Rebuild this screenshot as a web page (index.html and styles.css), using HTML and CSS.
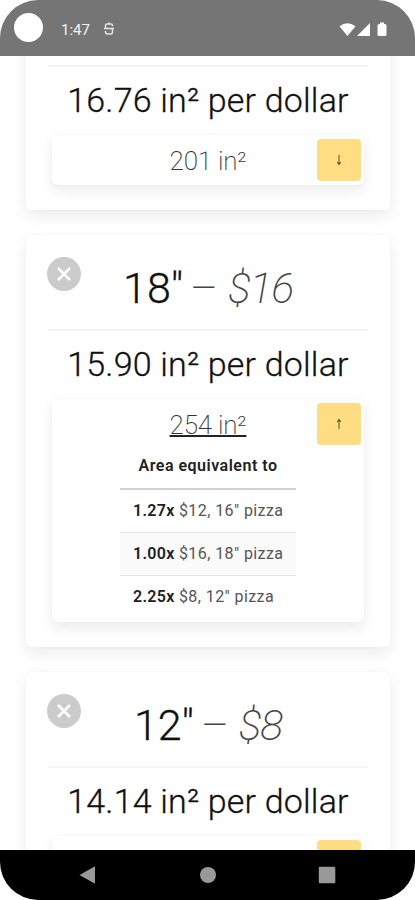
FILE: index.html
```html
<!DOCTYPE html>
<html lang="en">
<head>
<meta charset="utf-8">
<title>Pizza value</title>
<link rel="stylesheet" href="styles.css">
</head>
<body>
<div class="screen">
  <header class="status">
    <span class="camera"></span>
    <span class="clock">1:47</span>
    <svg class="app-icon" width="12" height="16" viewBox="0 0 12 16" fill="none" stroke="#e4e4e4" stroke-width="1.500"><path d="M9.500 5.200V4.500Q9.500 3 8 3H4Q2.500 3 2.500 4.500V6Q2.500 7.500 4 7.500H8Q9.500 7.500 9.500 9V11Q9.500 13 7.500 13H4.500Q2.500 13 2.500 11V10M6 1.500V3M1 7.500H11"/></svg>
    <svg class="signals" width="48" height="16" viewBox="0 0 48 16" fill="#fff"><path d="M0.500 4.200Q8.500-1.500 16.500 4.200L8.500 14ZM18 14L31 1V14ZM38.500 3.500Q38.500 2 40 2H41V0.500H45V2H46Q47.500 2 47.500 3.500V12.500Q47.500 14 46 14H40Q38.500 14 38.500 12.500Z"/></svg>
  </header>
  <main class="list">
    <article class="card">
      <div class="head"></div>
      <p class="rate">16.76 in² per dollar</p>
      <section class="area">
        <div class="area-value">201 in²</div>
        <button class="toggle"><svg width="8" height="12" viewBox="0 0 8 12"><path d="M4 1V10.500M2.300 8.200L4 10.500L5.700 8.200"/></svg></button>
      </section>
    </article>
    <article class="card">
      <div class="head">
        <button class="remove"><svg width="34" height="34" viewBox="0 0 34 34"><path d="M11 11L23 23M23 11L11 23"/></svg></button>
        <h2 class="title"><span class="size">18"</span><span class="dash">–</span><em>$16</em></h2>
      </div>
      <p class="rate">15.90 in² per dollar</p>
      <section class="area">
        <div class="area-value open">254 in²</div>
        <button class="toggle"><svg width="8" height="12" viewBox="0 0 8 12"><path d="M4 11V1.500M2.300 3.800L4 1.500L5.700 3.800"/></svg></button>
        <table class="compare">
          <thead><tr><th>Area equivalent to</th></tr></thead>
          <tbody>
            <tr><td><b>1.27x</b> $12, 16" pizza</td></tr>
            <tr class="current"><td><b>1.00x</b> $16, 18" pizza</td></tr>
            <tr><td><b>2.25x</b> $8, 12" pizza</td></tr>
          </tbody>
        </table>
      </section>
    </article>
    <article class="card">
      <div class="head">
        <button class="remove"><svg width="34" height="34" viewBox="0 0 34 34"><path d="M11 11L23 23M23 11L11 23"/></svg></button>
        <h2 class="title"><span class="size">12"</span><span class="dash">–</span><em>$8</em></h2>
      </div>
      <p class="rate">14.14 in² per dollar</p>
      <section class="area">
        <div class="area-value"></div>
        <button class="toggle"></button>
      </section>
    </article>
  </main>
  <nav class="nav">
    <svg width="18" height="20" viewBox="0 0 18 20"><path d="M0.500 10L16 1.200V18.800Z"/></svg>
    <svg width="18" height="18" viewBox="0 0 18 18"><circle cx="9" cy="9" r="8"/></svg>
    <svg width="18" height="18" viewBox="0 0 18 18"><rect x="0.800" y="0.800" width="16.500" height="16.500" rx="1"/></svg>
  </nav>
</div>
</body>
</html>
```
FILE: styles.css
```css
* { box-sizing: border-box; }
body { margin: 0; background: #fff; font-family: Roboto, sans-serif; color: #212121; }
p, h2 { margin: 0; }
button { border: 0; padding: 0; display: grid; place-items: center; }
.screen { width: 415px; height: 900px; display: flex; flex-direction: column; overflow: hidden; border-radius: 38px; }
.status { flex: none; height: 56px; background: #757575; display: flex; align-items: center; padding: 4px 28px 0 14px; color: #f4f4f4; }
.camera { width: 29px; height: 29px; border-radius: 50%; background: #fff; margin-top: -6px; }
.clock { font-size: 15px; margin-left: 18px; width: 42px; }
.app-icon { margin-top: -2px; }
.signals { margin-left: auto; margin-top: -1px; }
.list { flex: 1; min-height: 0; overflow: hidden; padding: 0 25px 0 26px; background: #fff; }
.card { background: #fff; border-radius: 6px; margin-bottom: 25px; padding: 0 26px 25px; box-shadow: 0 6px 16px rgba(0,0,0,.08), 0 0 5px rgba(0,0,0,.02); }
.card:first-child { margin-top: -85px; }
.head { height: 96px; margin: 0 -4px; border-bottom: 2px solid #f6f6f6; position: relative; }
.remove { position: absolute; left: -1px; top: 22px; width: 34px; height: 34px; border-radius: 50%; background: #cbcbcb; }
.remove path { stroke: #fff; stroke-width: 2.500; }
.title { display: flex; justify-content: center; align-items: baseline; font-size: 43px; line-height: 50px; font-weight: 200; padding-top: 28px; letter-spacing: -.3px; }
.size { font-weight: 300; color: #111; letter-spacing: 0; -webkit-text-stroke: .3px #111; }
.dash { color: #444; margin: 0 10px 0 7px; }
.title em { color: #444; letter-spacing: -1.200px; }
.rate { height: 68px; padding-top: 13px; font-size: 34px; line-height: 40px; font-weight: 300; letter-spacing: .18px; color: #111; -webkit-text-stroke: .3px #111; text-align: center; white-space: nowrap; }
.area { min-height: 50px; border-radius: 6px; box-shadow: 0 6px 14px rgba(0,0,0,.08), 0 0 5px rgba(0,0,0,.02); position: relative; padding: 8px 0 1px; background: #fff; }
.area-value { height: 36px; font-size: 26px; line-height: 36px; font-weight: 200; letter-spacing: -.2px; color: #333; text-align: center; }
.open { text-decoration: underline; text-decoration-color: #222; text-decoration-thickness: 2px; }
.toggle { position: absolute; top: 4px; right: 3px; width: 44px; height: 42px; border-radius: 4px; background: #ffdd82; }
.toggle path { fill: none; stroke: #6d5c31; stroke-width: 1.100; }
.compare { width: 176px; margin: 0 auto 3px 68px; border-collapse: collapse; font-size: 16px; color: #555; letter-spacing: .42px; }
.compare th { height: 46px; padding: 0; color: #212121; font-weight: 600; letter-spacing: .5px; border-bottom: 2px solid #d2d2d2; white-space: nowrap; }
.compare td { height: 43px; padding: 0 0 0 13px; white-space: nowrap; font-weight: 400; }
.compare b { color: #212121; font-weight: 600; letter-spacing: .3px; }
.current td { background: #fafafa; border-top: 1px solid #e5e5e5; border-bottom: 1px solid #e5e5e5; }
.nav { flex: none; height: 50px; background: #000; display: flex; justify-content: space-between; align-items: center; padding: 0 79px; fill: #999; }
```
